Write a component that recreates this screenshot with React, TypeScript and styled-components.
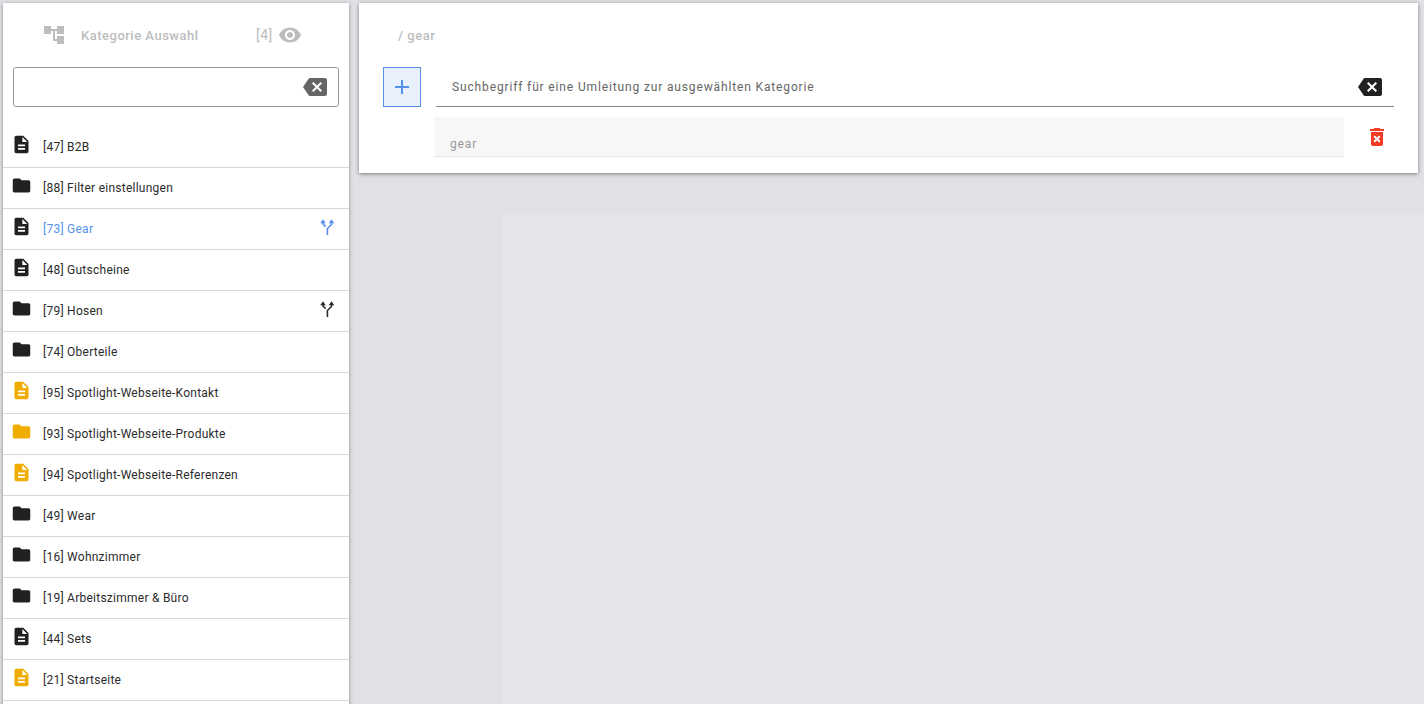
import React from "react";
import styled, { createGlobalStyle } from "styled-components";

const Global = createGlobalStyle`
  html, body { margin: 0; padding: 0; height: 100%; overflow: hidden; background: #e0e1e5; }
  body { font-family: Roboto, "Liberation Sans", sans-serif; }
  #root { height: 100%; }
`;

const Page = styled.div`
  display: grid;
  grid-template-columns: 346px 1fr;
  column-gap: 10px;
  height: 704px;
  padding: 3px 0 0 3px;
  box-sizing: border-box;
  overflow: hidden;
`;

const Sidebar = styled.aside`
  background: #fff;
  height: 760px;
  box-shadow: 0 1px 4px rgba(0, 0, 0, 0.4);
`;

const SideHeader = styled.header`
  display: flex;
  align-items: center;
  height: 64px;
  padding-left: 39px;
  color: #bdbdbd;
  font-size: 13px;
  font-weight: 500;
  letter-spacing: 0.5px;
`;

const HeaderTitle = styled.span`
  margin-left: 15px;
  width: 175px;
`;

const HeaderCount = styled.span`
  font-weight: 400;
  font-size: 14px;
  margin-right: 5px;
`;

const SearchBox = styled.div`
  display: flex;
  align-items: center;
  justify-content: flex-end;
  height: 40px;
  margin: 0 10px;
  padding-right: 11px;
  box-sizing: border-box;
  border: 1px solid #999;
  border-radius: 3px;
  color: #666;
`;

const List = styled.ul`
  list-style: none;
  margin: 20px 0 0;
  padding: 0;
`;

const Row = styled.li<{ $active?: boolean }>`
  display: flex;
  align-items: center;
  height: 41px;
  box-sizing: border-box;
  border-bottom: 1px solid #d8d8d8;
  padding: 0 14px 0 7.5px;
  color: ${(p) => (p.$active ? "#5591ea" : "#2b2b2b")};
  font-size: 12px;
  letter-spacing: 0.25px;
`;

const RowIcon = styled.span<{ $tint: string }>`
  display: flex;
  width: 21px;
  height: 21px;
  margin: -6px 11.5px 0 0;
  color: ${(p) => p.$tint};
`;

const RowLabel = styled.span`
  flex: 1;
  white-space: nowrap;
`;

const BranchMark = styled.span`
  display: flex;
  margin: -4px 0 0 0;
`;

const Content = styled.div`
  display: flex;
  flex-direction: column;
  min-width: 0;
`;

const TopPanel = styled.section`
  background: #fff;
  height: 170px;
  margin-right: 6px;
  padding: 0 24px;
  box-sizing: border-box;
  box-shadow: 0 1px 4px rgba(0, 0, 0, 0.45);
`;

const Crumb = styled.div`
  display: flex;
  align-items: center;
  height: 64px;
  padding-left: 15px;
  color: #bdbdbd;
  font-size: 13px;
  font-weight: 500;
  letter-spacing: 0.5px;
`;

const InputRow = styled.div`
  display: flex;
  align-items: stretch;
  height: 40px;
`;

const AddButton = styled.button`
  display: flex;
  align-items: center;
  justify-content: center;
  width: 38px;
  height: 40px;
  padding: 0;
  box-sizing: border-box;
  border: 1px solid #5591ea;
  border-radius: 0;
  background: #e8f1fb;
  color: #5591ea;
`;

const TermField = styled.div`
  flex: 1;
  display: flex;
  align-items: center;
  justify-content: space-between;
  margin-left: 15px;
  padding: 0 12px 0 16px;
  border-bottom: 1px solid #888;
  color: #666;
  font-size: 12px;
  letter-spacing: 0.86px;
`;

const ClearIcon = styled.span`
  display: flex;
  color: #212121;
`;

const ResultRow = styled.div`
  display: flex;
  align-items: center;
  height: 40px;
  margin: 10px 0 0 51px;
`;

const ResultField = styled.div`
  flex: 0 0 910px;
  height: 40px;
  box-sizing: border-box;
  padding: 20px 16px 0;
  background: #f7f7f7;
  border-bottom: 1px solid #e6e6e6;
  color: #999;
  font-size: 12px;
  letter-spacing: 0.86px;
`;

const TrashIcon = styled.span`
  display: flex;
  margin: -1px 0 0 21px;
  color: #f33a22;
`;

const Backdrop = styled.div`
  flex: 1;
  margin: 40px 0 0 143px;
  background: #e4e5e9;
`;

const Path = ({ d, size = 24 }: { d: string; size?: number }) => (
  <svg width={size} height={size} viewBox="0 0 24 24" fill="currentColor">
    <path d={d} />
  </svg>
);

const DOC = "M14 2H6c-1.1 0-1.99.9-1.99 2L4 20c0 1.1.89 2 1.99 2H18c1.1 0 2-.9 2-2V8l-6-6zm2 16H8v-2h8v2zm0-4H8v-2h8v2zm-3-5V3.5L18.5 9H13z";
const FOLDER = "M10 4H4c-1.1 0-1.99.9-1.99 2L2 18c0 1.1.9 2 2 2h16c1.1 0 2-.9 2-2V8c0-1.1-.9-2-2-2h-8l-2-2z";
const BACKSPACE = "M22 3H7c-.69 0-1.23.35-1.59.88L0 12l5.41 8.11c.36.53.9.89 1.59.89h15c1.1 0 2-.9 2-2V5c0-1.1-.9-2-2-2zm-3 12.59L17.59 17 14 13.41 10.41 17 9 15.59 12.59 12 9 8.41 10.41 7 14 10.59 17.59 7 19 8.41 15.41 12 19 15.59z";
const EYE = "M12 4.5C7 4.5 2.73 7.61 1 12c1.73 4.39 6 7.5 11 7.5s9.27-3.11 11-7.5c-1.73-4.39-6-7.5-11-7.5zM12 17c-2.76 0-5-2.24-5-5s2.24-5 5-5 5 2.24 5 5-2.24 5-5 5zm0-8c-1.66 0-3 1.34-3 3s1.34 3 3 3 3-1.34 3-3-1.34-3-3-3z";
const TREE = "M22 11V3h-7v3H9V3H2v8h7V8h2v10h4v3h7v-8h-7v3h-2V8h2v3z";
const TRASH = "M6 19c0 1.1.9 2 2 2h8c1.1 0 2-.9 2-2V7H6v12zm2.46-7.12l1.41-1.41L12 12.59l2.12-2.12 1.41 1.41L13.41 14l2.12 2.12-1.41 1.41L12 15.41l-2.12 2.12-1.41-1.41L10.59 14l-2.13-2.12zM15.5 4l-1-1h-5l-1 1H5v2h14V4z";

const Branch = () => (
  <svg width="15" height="16" viewBox="0 0 15 16" fill="none" stroke="currentColor" strokeWidth="1.6">
    <path d="M7.4 16V9.5L11.5 5.5V3" />
    <path d="M5.7 7.6L3 5V3" />
    <path d="M0.2 4.2L3 0.3 5.8 4.2z" fill="currentColor" stroke="none" />
    <path d="M8.7 4.2L11.5 0.3 14.3 4.2z" fill="currentColor" stroke="none" />
  </svg>
);

type Item = { label: string; kind: "doc" | "folder"; spot?: boolean; active?: boolean; branch?: boolean };

const items: Item[] = [
  { label: "[47] B2B", kind: "doc" },
  { label: "[88] Filter einstellungen", kind: "folder" },
  { label: "[73] Gear", kind: "doc", active: true, branch: true },
  { label: "[48] Gutscheine", kind: "doc" },
  { label: "[79] Hosen", kind: "folder", branch: true },
  { label: "[74] Oberteile", kind: "folder" },
  { label: "[95] Spotlight-Webseite-Kontakt", kind: "doc", spot: true },
  { label: "[93] Spotlight-Webseite-Produkte", kind: "folder", spot: true },
  { label: "[94] Spotlight-Webseite-Referenzen", kind: "doc", spot: true },
  { label: "[49] Wear", kind: "folder" },
  { label: "[16] Wohnzimmer", kind: "folder" },
  { label: "[19] Arbeitszimmer & Büro", kind: "folder" },
  { label: "[44] Sets", kind: "doc" },
  { label: "[21] Startseite", kind: "doc", spot: true },
];

export default function App() {
  return (
    <Page>
      <Global />
      <Sidebar>
        <SideHeader>
          <Path d={TREE} />
          <HeaderTitle>Kategorie Auswahl</HeaderTitle>
          <HeaderCount>[4]</HeaderCount>
          <Path d={EYE} />
        </SideHeader>
        <SearchBox>
          <Path d={BACKSPACE} />
        </SearchBox>
        <List>
          {items.map((it) => (
            <Row key={it.label} $active={it.active}>
              <RowIcon $tint={it.spot ? "#f0ad00" : "#212121"}>
                <Path d={it.kind === "doc" ? DOC : FOLDER} size={21} />
              </RowIcon>
              <RowLabel>{it.label}</RowLabel>
              {it.branch && (
                <BranchMark>
                  <Branch />
                </BranchMark>
              )}
            </Row>
          ))}
        </List>
      </Sidebar>
      <Content>
        <TopPanel>
          <Crumb>/ gear</Crumb>
          <InputRow>
            <AddButton aria-label="Hinzufügen">
              <Path d="M19 13h-6v6h-2v-6H5v-2h6V5h2v6h6v2z" />
            </AddButton>
            <TermField>
              Suchbegriff für eine Umleitung zur ausgewählten Kategorie
              <ClearIcon>
                <Path d={BACKSPACE} />
              </ClearIcon>
            </TermField>
          </InputRow>
          <ResultRow>
            <ResultField>gear</ResultField>
            <TrashIcon>
              <Path d={TRASH} />
            </TrashIcon>
          </ResultRow>
        </TopPanel>
        <Backdrop />
      </Content>
    </Page>
  );
}
